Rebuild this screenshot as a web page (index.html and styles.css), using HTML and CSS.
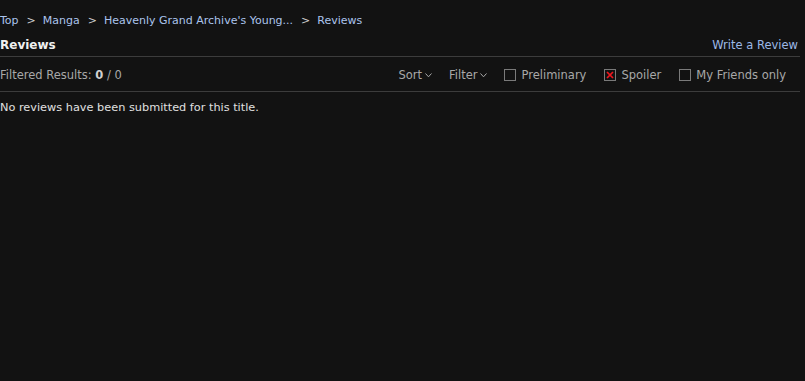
FILE: index.html
```html
<!DOCTYPE html>
<html>
<head>
<meta charset="utf-8">
<link rel="stylesheet" href="styles.css">
</head>
<body>
<div class="page">
  <nav class="breadcrumb">
    <a href="#">Top</a><span class="sep">&gt;</span>
    <a href="#">Manga</a><span class="sep">&gt;</span>
    <a href="#">Heavenly Grand Archive's Young...</a><span class="sep">&gt;</span>
    <a href="#">Reviews</a>
  </nav>
  <div class="header">
    <h2 class="title">Reviews</h2>
    <a class="write" href="#">Write a Review</a>
  </div>
  <div class="filters">
    <div class="count">Filtered Results: <b>0</b> / 0</div>
    <div class="controls">
      <span class="dd">Sort<svg class="chev" viewBox="0 0 7 5" width="7" height="5"><path d="M0.5 0.5 L3.5 3.8 L6.5 0.5" fill="none" stroke="currentColor" stroke-width="1"/></svg></span>
      <span class="dd">Filter<svg class="chev" viewBox="0 0 7 5" width="7" height="5"><path d="M0.5 0.5 L3.5 3.8 L6.5 0.5" fill="none" stroke="currentColor" stroke-width="1"/></svg></span>
      <label class="cb"><span class="box"></span>Preliminary</label>
      <label class="cb"><span class="box"><svg viewBox="0 0 8 8" width="8" height="8"><path d="M1 1 L7 7 M7 1 L1 7" stroke="#f0141c" stroke-width="1.7"/></svg></span>Spoiler</label>
      <label class="cb"><span class="box"></span>My Friends only</label>
    </div>
  </div>
  <p class="empty">No reviews have been submitted for this title.</p>
</div>
</body>
</html>
```
FILE: styles.css
```css
html, body {
  margin: 0;
  padding: 0;
  background: #121212;
}
body {
  font-family: "DejaVu Sans", Verdana, sans-serif;
  font-size: 11.5px;
  color: #e0e0e0;
}
.page {
  width: 800px;
}
a {
  text-decoration: none;
  color: #abc4ed;
}
.breadcrumb {
  display: flex;
  align-items: center;
  height: 20px;
  padding-top: 11px;
  line-height: 20px;
  font-size: 11px;
}
.breadcrumb .sep {
  color: #cfcfcf;
  margin: 0 7px 0 8px;
}
.header {
  display: flex;
  justify-content: space-between;
  align-items: flex-end;
  border-bottom: 1px solid #3c3c3c;
  height: 26px;
  box-sizing: border-box;
  padding: 0 2px 3px 0;
}
.title {
  margin: 0;
  font-size: 12px;
  font-weight: bold;
  color: #f0f0f0;
  line-height: 16px;
}
.write {
  color: #9cb8e6;
  line-height: 16px;
}
.filters {
  display: flex;
  justify-content: space-between;
  align-items: center;
  height: 35px;
  padding-top: 2px;
  border-bottom: 1px solid #3c3c3c;
  box-sizing: border-box;
  color: #a8a8a8;
}
.count b {
  color: #d0d0d0;
}
.controls {
  display: flex;
  align-items: center;
  gap: 17px;
  padding-right: 14px;
}
.dd {
  display: flex;
  align-items: center;
  gap: 3px;
}
.chev {
  margin-top: 1px;
}
.cb {
  display: flex;
  align-items: center;
  gap: 5px;
}
.cb + .cb {
  margin-left: 1px;
}
.box {
  width: 10px;
  height: 10px;
  border: 1px solid #7a7a7a;
  display: flex;
  align-items: center;
  justify-content: center;
}
.empty {
  margin: 8px 0 0;
  line-height: 16px;
  font-size: 11.3px;
}
```
